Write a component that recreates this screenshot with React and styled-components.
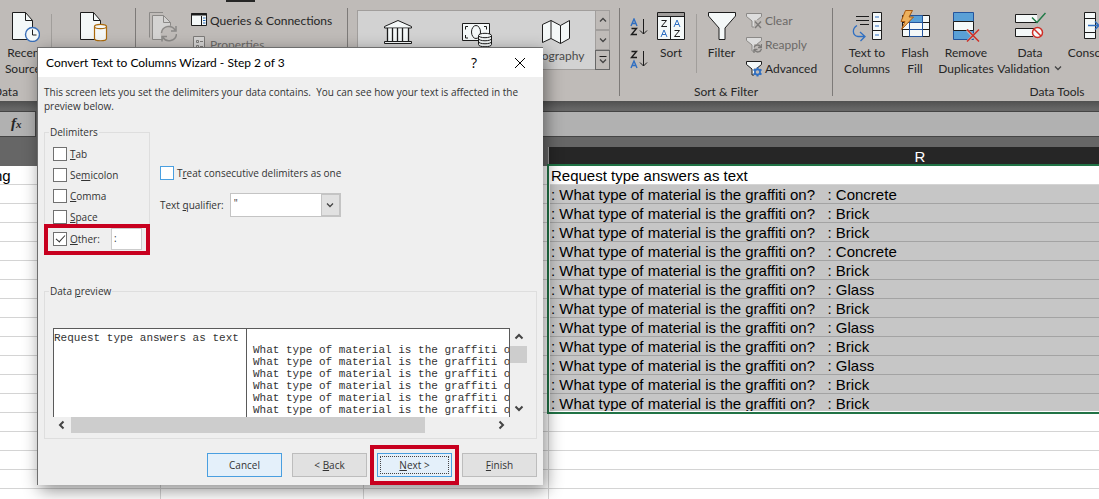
import React, { useState } from 'react'
import styled, { createGlobalStyle, css } from 'styled-components'

const UI_FONT = 'Lato, "Open Sans", sans-serif'
const WIZARD_FONT = '"Open Sans", "Noto Sans", sans-serif'
const SHEET_FONT = '"Liberation Sans", Arial, sans-serif'

const GlobalStyle = createGlobalStyle`
  *, *::before, *::after {
    box-sizing: border-box;
  }
  body {
    margin: 0;
    overflow: hidden;
    font-family: ${UI_FONT};
    font-size: 12px;
    color: #262626;
  }
  button, input, select {
    font: inherit;
    color: inherit;
  }
`

const Page = styled.div`
  position: relative;
  display: flex;
  flex-direction: column;
  height: 100vh;
  overflow: hidden;
  background: #ffffff;
`

/* ribbon */

const Ribbon = styled.header`
  display: flex;
  flex: none;
  overflow: hidden;
  background: linear-gradient(#262626, #262626) 226px 0 / 29px 2px no-repeat, #bfbbb8;
`

const Group = styled.section`
  display: flex;
  flex: none;
  flex-direction: column;
  width: ${({ $width }) => $width}px;
  padding-top: 8px;
`

const GroupBody = styled.div`
  display: flex;
  align-items: flex-start;
  height: 76px;
`

const GroupLabel = styled.div`
  height: 17px;
  line-height: 16px;
  text-align: ${({ $align }) => $align || 'center'};
  white-space: nowrap;
`

const Divider = styled.div`
  flex: none;
  width: 1px;
  height: 88px;
  margin: 8px 0 5px;
  background: #7d7a78;
`

const InnerDivider = styled.div`
  flex: none;
  width: 1px;
  height: 59px;
  margin-top: 6px;
  background: #a19e9b;
`

const LargeButton = styled.button`
  display: flex;
  flex: none;
  flex-direction: column;
  align-items: center;
  width: ${({ $width }) => $width}px;
  padding: 4px 0 0;
  border: 0;
  background: none;
  line-height: 16px;
  white-space: nowrap;
  > svg {
    margin-bottom: 3px;
  }
`

const SmallList = styled.div`
  display: flex;
  flex-direction: column;
  padding-left: ${({ $inset }) => $inset}px;
`

const SmallButton = styled.button`
  display: flex;
  align-items: center;
  gap: 3px;
  height: 24px;
  padding: 0;
  border: 0;
  background: none;
  color: ${({ $muted }) => ($muted ? '#6b6967' : '#262626')};
  white-space: nowrap;
`

const OrderButtons = styled.div`
  display: flex;
  flex-direction: column;
  gap: 12px;
  width: 37px;
  padding: 10px 0 0 10px;
`

const IconButton = styled.button`
  display: block;
  height: 20px;
  padding: 0;
  border: 0;
  background: none;
  svg {
    display: block;
  }
`

const Gallery = styled.div`
  display: flex;
  height: 60px;
  margin: 2px 9px 0;
  border: 1px solid #a19e9c;
  background: #d2d2d2;
`

const GalleryItem = styled.button`
  display: flex;
  flex: 1;
  flex-direction: column;
  align-items: center;
  padding: 7px 0 0;
  border: 0;
  background: none;
  color: #4a4a4a;
`

const GalleryScroll = styled.div`
  display: flex;
  flex-direction: column;
  width: 15px;
  margin: -1px -1px -1px 0;
`

const GalleryArrow = styled.button`
  display: grid;
  place-items: center;
  flex: 1;
  padding: 0;
  border: 1px solid ${({ $strong }) => ($strong ? '#666666' : '#a19e9c')};
  background: #bfbbb8;
`

/* formula bar and sheet */

const FormulaStrip = styled.div`
  display: flex;
  flex: none;
  gap: 3px;
  height: 46px;
  padding: 10px 0;
  background: linear-gradient(#505050, #666666 8px);
`

const FormulaBox = styled.div`
  flex: ${({ $grow }) => ($grow ? 1 : 'none')};
  width: ${({ $grow }) => ($grow ? 'auto' : '36px')};
  padding-left: 11px;
  border: 1px solid #444444;
  border-width: 1px ${({ $grow }) => ($grow ? 0 : 1)}px 1px 0;
  background: #b1b1b1;
  font: italic bold 15px/23px "Liberation Serif", serif;
  sub {
    font-size: 11px;
    line-height: 0;
    vertical-align: baseline;
  }
`

const Sheet = styled.main`
  position: relative;
  flex: 1;
  overflow: hidden;
`

const SheetTable = styled.table`
  width: 1292px;
  table-layout: fixed;
  border-collapse: separate;
  border-spacing: 0;
  font: 15px/16px ${SHEET_FONT};
  color: #000000;
`

const ColumnHead = styled.th`
  height: 19px;
  padding: 0;
  border-right: 1px solid #a0a0a0;
  background: ${({ $active }) => ($active ? '#262626' : '#666666')};
  color: #ffffff;
  font-weight: normal;
`

const Cell = styled.td`
  height: 19px;
  padding: 2px 0 0 2px;
  border: 1px solid #d4d4d4;
  border-width: 0 1px 1px 0;
  overflow: hidden;
  white-space: pre;
  ${({ $selected }) => $selected && css`
    border-color: #a3a3a3;
    background: #c6c6c6;
  `}
  ${({ $clipped }) => $clipped && css`
    text-indent: -8px;
  `}
`

const Selection = styled.div`
  position: absolute;
  top: 17px;
  right: -4px;
  left: 547px;
  height: 250px;
  border: 2px solid #217346;
  box-shadow: inset 0 0 0 1px #ffffff;
  pointer-events: none;
`

/* wizard */

const Dialog = styled.form`
  position: absolute;
  top: 47px;
  left: 37px;
  width: 506px;
  border: 1px solid #6e6e6e;
  border-width: 1px 0 0 1px;
  background: #efefef;
  box-shadow: 3px 5px 16px rgba(0, 0, 0, 0.45);
  font-family: ${WIZARD_FONT};
  font-size: 10px;
  line-height: 14px;
  color: #333333;
`

const TitleBar = styled.div`
  display: flex;
  align-items: center;
  height: 29px;
  padding-left: 8px;
  background: #ffffff;
  color: #000000;
`

const Title = styled.h1`
  flex: 1;
  margin: 0;
  font: 12px/16px ${UI_FONT};
`

const TitleButton = styled.button`
  display: grid;
  place-items: center;
  width: 46px;
  height: 29px;
  padding: 0;
  border: 0;
  background: none;
  font-size: 14px;
`

const DialogBody = styled.div`
  padding: 8px 6px;
`

const Intro = styled.p`
  margin: 0 0 12px;
  padding-right: 16px;
`

const Options = styled.div`
  display: flex;
  gap: 10px;
  margin-bottom: 31px;
`

const Fieldset = styled.fieldset`
  min-width: 0;
  margin: 0;
  padding: ${({ $padding }) => $padding};
  border: 1px solid #dedede;
  legend {
    margin-left: -4px;
    padding: 0 1px;
  }
`

const DelimiterGroup = styled(Fieldset)`
  display: flex;
  flex-direction: column;
  width: 106px;
`

const CheckList = styled.div`
  display: flex;
  flex-direction: column;
  gap: 1px;
`

const CheckRow = styled.div`
  position: relative;
  display: flex;
  align-items: center;
  gap: 3px;
  height: ${({ $tall }) => ($tall ? 22 : 20)}px;
`

const CheckBox = styled.input`
  display: grid;
  place-items: center;
  appearance: none;
  width: 14px;
  height: 14px;
  margin: 0;
  border: 1px solid ${({ $hot }) => ($hot ? '#4a9fe0' : '#707070')};
  background: #ffffff;
  &:checked::before {
    content: '';
    width: 9px;
    height: 5px;
    margin-top: -3px;
    border: solid #333333;
    border-width: 0 0 1px 1px;
    transform: rotate(-48deg);
  }
`

const OtherInput = styled.input`
  width: 31px;
  height: 22px;
  margin-left: auto;
  padding: 0 2px 2px;
  border: 1px solid #cccccc;
  background: #ffffff;
`

const redFrame = css`
  &::after {
    content: '';
    position: absolute;
    border: 4px solid #c8001f;
    pointer-events: none;
  }
`

const OtherRow = styled(CheckRow)`
  padding-right: 7px;
  ${redFrame}
  &::after {
    inset: -4px -1px -5px -9px;
  }
`

const SideOptions = styled.div`
  display: flex;
  flex-direction: column;
  gap: 10px;
  padding-top: 38px;
`

const QualifierRow = styled.div`
  display: flex;
  align-items: center;
  gap: 6px;
`

const SelectBox = styled.div`
  display: grid;
  grid-template-columns: 1fr 19px;
  width: 111px;
  height: 24px;
  border: 1px solid #c4c4c4;
  background: #ffffff;
  select {
    grid-area: 1 / 1 / 2 / 3;
    appearance: none;
    padding: 0 3px 4px;
    border: 0;
    background: none;
  }
  span {
    grid-area: 1 / 2;
    display: grid;
    place-items: center;
    border: 1px solid #c4c4c4;
    background: #e1e1e1;
    pointer-events: none;
  }
`

const PreviewGrid = styled.div`
  display: grid;
  grid-template-columns: 1fr 17px;
`

const PreviewPane = styled.div`
  height: 89px;
  overflow: hidden;
  border: 1px solid #5a5a5a;
  border-bottom: 0;
  background: #ffffff;
`

const PreviewTable = styled.table`
  width: 100%;
  table-layout: fixed;
  border-spacing: 0;
  font: 11px/12px "Liberation Mono", monospace;
  td {
    height: 12px;
    padding: 0;
    overflow: hidden;
    white-space: nowrap;
    vertical-align: top;
  }
  td:first-child {
    width: 193px;
    border-right: 1px solid #5a5a5a;
  }
  td:last-child {
    padding-left: 6px;
  }
  tr:first-child td {
    height: 15px;
    padding-top: 3px;
  }
  tr:last-child td {
    height: 14px;
  }
`

const ScrollTrack = styled.div`
  display: flex;
  flex-direction: ${({ $vertical }) => ($vertical ? 'column' : 'row')};
  align-items: center;
  justify-content: space-between;
  height: ${({ $vertical }) => ($vertical ? 'auto' : '16px')};
  width: ${({ $vertical }) => ($vertical ? '17px' : 'auto')};
`

const ScrollArrow = styled.button`
  display: grid;
  place-items: center;
  width: 18px;
  height: 18px;
  padding: 0;
  border: 0;
  background: none;
`

const ScrollThumb = styled.div`
  width: ${({ $vertical }) => ($vertical ? '17px' : '354px')};
  height: ${({ $vertical }) => ($vertical ? '17px' : '16px')};
  margin: ${({ $vertical }) => ($vertical ? '0 0 auto' : '0 auto 0 0')};
  background: #cdcdcd;
`

const Footer = styled.div`
  display: flex;
  justify-content: flex-end;
  gap: 10px;
  margin-top: 14px;
`

const ActionSlot = styled.div`
  position: relative;
  ${({ $framed }) => $framed && redFrame}
  &::after {
    inset: -8px -7px;
  }
`

const ActionButton = styled.button`
  display: block;
  width: 75px;
  height: 24px;
  padding: 2px;
  border: 1px solid ${({ $hot }) => ($hot ? '#4a9fe0' : '#bdbdbd')};
  background: ${({ $hot }) => ($hot ? '#e4f0fa' : '#e1e1e1')};
  span {
    display: block;
    height: 18px;
    line-height: 16px;
    border: 1px ${({ $focused }) => ($focused ? 'dotted #444444' : 'solid transparent')};
  }
`

/* icons */

const Svg = ({ w = 28, h = 30, children }) => (
  <svg width={w} height={h} viewBox={`0 0 ${w} ${h}`} fill="none" stroke="#1c1c1c" aria-hidden="true">
    {children}
  </svg>
)

const RecentIcon = () => <Svg>
  <path d="M.5.5h13l7 8v19H.5z" fill="#f4f8f8" />
  <path d="M13.5.5v8h7" />
  <circle cx="20.500" cy="22.500" r="7" fill="#f4f8f8" stroke="#3a6fb8" strokeWidth="1.400" />
  <path d="M20.500 17.500v5.500h4" />
</Svg>

const ConnectionsIcon = () => <Svg>
  <path d="M.5.5h13l7 8v19H.5z" fill="#f4f8f8" />
  <path d="M13.5.5v8h7" />
  <path d="M14.500 14.500v12c0 3 12 3 12 0v-12" fill="#f4f8f8" stroke="#ab6a0c" strokeWidth="1.200" />
  <ellipse cx="20.500" cy="14.500" rx="6" ry="2.200" fill="#f4f8f8" stroke="#ab6a0c" strokeWidth="1.200" />
</Svg>

const RefreshIcon = () => <Svg>
  <g stroke="#8b8987">
    <path d="M14 .5H.5v25" />
    <path d="M3.500 27.500v-24h11l7 7v17z" fill="#d4d3d2" />
    <path d="M14.500 3.500v7h7" />
    <circle cx="20" cy="22" r="8.500" fill="#bfbbb8" stroke="none" />
    <path d="M12.500 21c.5-7 10-9 13.500-3M27 14v5h-5M27.500 22c-.5 7-10 9-13.500 3.500M13 29.500v-5h5" strokeWidth="1.500" />
  </g>
</Svg>

const QueriesIcon = () => <Svg w={16} h={16}>
  <path d="M.5 1.500h15v12H.5z" fill="#f4f8f8" />
  <path d="M0 2.500h16" strokeWidth="2" />
  <path d="M10.500 4v9" />
  <path d="M12 6h2.500M12 8.500h2.500M12 11h2.500" stroke="#2b6cb8" />
</Svg>

const PropertiesIcon = () => <Svg w={16} h={16}>
  <g stroke="#7c7a78">
    <path d="M2.500.5h11v15h-11z" fill="#d4d3d2" />
    <path d="M5.500 4.500h2v2h-2zM5.500 9.500h2v2h-2zM9 5.500h3M9 10.500h3" />
  </g>
</Svg>

const BankIcon = () => <Svg h={30}>
  <path d="M.5 8.500 14 2.500l13.500 6v1.500H.5z" fill="#f4f8f8" />
  <path d="M3.500 10.500h21v13h-21z" fill="#f4f8f8" stroke="none" />
  <path d="M3.500 10v13M8.500 10v13M13.500 10v13M18.500 10v13M24.500 10v13" strokeWidth="1.300" />
  <path d="M.5 23.500h27v2H.5z" fill="#f4f8f8" />
</Svg>

const MoneyIcon = () => <Svg w={30} h={30}>
  <path d="M.5 5.500h27v17H.5z" fill="#f4f8f8" />
  <path d="M6 8.500H3.500v3M3.500 17v3H6M22 8.500h2.500v3" />
  <ellipse cx="14" cy="14" rx="4.500" ry="6.500" />
  <path d="M16.500 17.500v9c0 3 13 3 13 0v-9" fill="#f4f8f8" />
  <ellipse cx="23" cy="17.500" rx="6.500" ry="2.200" fill="#f4f8f8" />
  <path d="M16.500 20.500c0 3 13 3 13 0M16.500 23.500c0 3 13 3 13 0" />
</Svg>

const MapIcon = () => <Svg h={30}>
  <path d="m.5 6.500 8.500-4 9.500 5 9-5v18l-9 5-9.500-5-8.500 4z" fill="#f4f8f8" />
  <path d="M9 2.500v18M18.500 7.500v18" />
</Svg>

const Chevron = ({ dir = 'down', bar, heavy }) => {
  const turn = { down: 0, left: 90, up: 180, right: 270 }[dir]
  return <Svg w={10} h={10}>
    {bar && <path d="M1.500 1.500h7" />}
    <path d={bar ? 'm2 4.500 3 3 3-3' : heavy ? 'm1.500 3.500 3.500 3.500 3.500-3.500' : 'm2 3.500 3 3 3-3'} transform={`rotate(${turn} 5 5)`} stroke="#444444" strokeWidth={heavy ? 2 : 1.300} />
  </Svg>
}

const A_SHAPE = 'm0 7 3-7 3 7M1 4.500h4'
const Z_SHAPE = 'M.5.5h5l-5 6h5.500'

const OrderIcon = ({ reverse }) => <Svg w={18} h={20}>
  <path d={A_SHAPE} transform={`translate(1 ${reverse ? 11 : 1})`} stroke="#2f6fc2" strokeWidth="1.400" />
  <path d={Z_SHAPE} transform={`translate(1 ${reverse ? 1 : 10})`} strokeWidth="1.400" />
  <path d="M13.500 1v15M10 12.500l3.500 3.500 3.500-3.500" />
</Svg>

const SortIcon = () => <Svg>
  <path d="M.5.5h27v27H.5z" fill="#f4f8f8" />
  <path d="M1 1h26v3H1z" fill="#a09d9b" stroke="none" />
  <path d="M.5 4.500h27M13.500 4.500v23" />
  <path d={Z_SHAPE} transform="translate(4 8)" />
  <path d={A_SHAPE} transform="translate(17 8)" stroke="#2f6fc2" />
  <path d={A_SHAPE} transform="translate(4 18)" stroke="#2f6fc2" />
  <path d={Z_SHAPE} transform="translate(17 18)" />
</Svg>

const FilterIcon = () => <Svg>
  <path d="M.5.5h27v3.500L17 16v11.500h-6V16L.5 4z" fill="#f4f8f8" />
</Svg>

const SmallFilterIcon = ({ kind }) => {
  const muted = kind !== 'advanced'
  return <Svg w={16} h={17}>
    <path d="M.5 1.500h15v3L10 9v6H6V9L.5 4.500z" fill={muted ? '#dddddd' : '#f4f8f8'} stroke={muted ? '#8b8987' : '#1c1c1c'} />
    <path d="M8 8h8v9H8z" fill="#bfbbb8" stroke="none" />
    {kind === 'clear' && <path d="m9 9.500 6 6.500M15 9.500 9 16" stroke="#7c7a78" strokeWidth="1.400" />}
    {kind === 'reapply' && <path d="M8 11.500c1-3 5-3.500 7-.5M15.500 8v3.500H12M15.500 13c-1 3.500-5 4-7 1M8 17v-3.500h3.500" stroke="#7c7a78" strokeWidth="1.300" />}
    {kind === 'advanced' && <>
      <circle cx="11.500" cy="12" r="2.600" stroke="#2f6fc2" strokeWidth="1.600" />
      <path d="M11.500 7.500v2M11.500 14.500v2M7.500 9.500l2 1.200M13.500 13.300l2 1.200M15.500 9.500l-2 1.200M9.500 13.300l-2 1.200" stroke="#2f6fc2" strokeWidth="2" />
    </>}
  </Svg>
}

const TextColumnsIcon = () => <Svg w={31}>
  <path d="M4 4.500h13M4 8.500h13M8 12.500h9" />
  <path d="M5 13.500c-5 3-5 10 1 11h6M8 20l5 4.500L8.500 29" stroke="#2f6fc2" strokeWidth="1.300" />
  <path d="M20.500.5h9v27h-9zM20.500 9.500h9M20.500 18.500h9" fill="#f4f8f8" />
  <path d="M23 5h4M23 14h4M23 23h4" stroke="#2f6fc2" />
</Svg>

const FlashIcon = () => (
  <svg width="32" height="30" viewBox="0 -2 32 30" fill="none" stroke="#1c1c1c" overflow="visible" aria-hidden="true">
    <path d="M3.500 1.500h27v21h-27z" fill="#f4f8f8" />
    <path d="M11 1.500h12.500v7H11z" fill="#5aa0d6" stroke="none" />
    <path d="M3.500 8.500h27M3.500 15.500h27M23.500 1.500v21" />
    <path d="M10.500 1.500h13v21h-13zM10.500 8.500h13M10.500 15.500h13" stroke="#24549c" />
    <path d="M6.500-3.500h7L10 3h4.500l-12 12.500L6 7.500H2z" fill="#edb05c" stroke="#a9590f" />
  </svg>
)

const DuplicatesIcon = () => <Svg w={28}>
  <path d="M1.500.5h20v9h-20zM1.500 18.500h20v9h-20z" fill="#5aa0d6" stroke="#24549c" />
  <path d="M1.500 9.500h20v9h-20z" fill="#f4f8f8" />
  <path d="m15 18 12 12M27 18 15 30" stroke="#bfbbb8" strokeWidth="3" />
  <path d="m15 17.500 12 12M27 17.500l-12 12" stroke="#cf2f27" strokeWidth="1.500" />
</Svg>

const ValidationIcon = () => <Svg w={32}>
  <path d="M23 2.500H1.500v8h22M19 24.500H1.500v-8H20" fill="#f4f8f8" />
  <path d="m18 5.500 5 5L31.500 1" stroke="#1f7a46" strokeWidth="1.500" />
  <circle cx="23.500" cy="20.500" r="5" fill="#f4f8f8" stroke="#cf2f27" strokeWidth="1.500" />
  <path d="m20 17 7 7" stroke="#cf2f27" strokeWidth="1.500" />
</Svg>

const ConsolidateIcon = () => <Svg w={30}>
  <path d="M.5.5h11v26H.5zM.5 6.500h11M.5 20.500h11M17.500 9.500h12v9h-12z" fill="#f4f8f8" />
  <path d="M4 13.500h11M11 9.500l4 4-4 4" stroke="#2f6fc2" strokeWidth="1.500" />
</Svg>

const CloseIcon = () => <Svg w={12} h={12}>
  <path d="m1 1 10 10M11 1 1 11" stroke="#000000" />
</Svg>

/* data */

const answers = [
  'Concrete', 'Brick', 'Brick', 'Concrete', 'Brick', 'Glass',
  'Brick', 'Glass', 'Brick', 'Glass', 'Brick', 'Brick'
]
const rows = [
  'Request type answers as text',
  ...answers.map(answer => `: What type of material is the graffiti on?   : ${answer}`)
]
const blankRows = 40

const delimiters = [
  { id: 'tab', label: <><u>T</u>ab</> },
  { id: 'semicolon', label: <>Se<u>m</u>icolon</> },
  { id: 'comma', label: <><u>C</u>omma</> },
  { id: 'space', label: <><u>S</u>pace</> }
]

const DataLabel = styled.span`
  margin-left: -7px;
`

const SortGap = styled.div`
  width: 11px;
`

const RibbonBar = () => <Ribbon>
  <Group $width={135}>
    <GroupBody>
      <LargeButton $width={51} type="button">
        <RecentIcon />
        <span>Recent<br />Sources</span>
      </LargeButton>
      <InnerDivider />
      <LargeButton $width={84} type="button" aria-label="Existing Connections"><ConnectionsIcon /></LargeButton>
    </GroupBody>
    <GroupLabel $align="left"><DataLabel>Data</DataLabel></GroupLabel>
  </Group>
  <Divider />
  <Group $width={211}>
    <GroupBody>
      <LargeButton $width={54} type="button" aria-label="Refresh All"><RefreshIcon /></LargeButton>
      <SmallList $inset={1}>
        <SmallButton type="button"><QueriesIcon />Queries &amp; Connections</SmallButton>
        <SmallButton type="button" $muted><PropertiesIcon />Properties</SmallButton>
      </SmallList>
    </GroupBody>
  </Group>
  <Divider />
  <Group $width={271}>
    <Gallery>
      <GalleryItem type="button" aria-label="Stocks"><BankIcon /></GalleryItem>
      <GalleryItem type="button" aria-label="Currencies"><MoneyIcon /></GalleryItem>
      <GalleryItem type="button"><MapIcon />Geography</GalleryItem>
      <GalleryScroll>
        <GalleryArrow type="button" aria-label="Previous row"><Chevron dir="up" /></GalleryArrow>
        <GalleryArrow type="button" aria-label="Next row"><Chevron /></GalleryArrow>
        <GalleryArrow type="button" aria-label="More" $strong><Chevron bar /></GalleryArrow>
      </GalleryScroll>
    </Gallery>
  </Group>
  <Divider />
  <Group $width={212}>
    <GroupBody>
      <OrderButtons>
        <IconButton type="button" aria-label="Sort A to Z"><OrderIcon /></IconButton>
        <IconButton type="button" aria-label="Sort Z to A"><OrderIcon reverse /></IconButton>
      </OrderButtons>
      <LargeButton $width={28} type="button"><SortIcon />Sort</LargeButton>
      <SortGap />
      <InnerDivider />
      <LargeButton $width={49} type="button"><FilterIcon />Filter</LargeButton>
      <SmallList $inset={0}>
        <SmallButton type="button" $muted><SmallFilterIcon kind="clear" />Clear</SmallButton>
        <SmallButton type="button" $muted><SmallFilterIcon kind="reapply" />Reapply</SmallButton>
        <SmallButton type="button"><SmallFilterIcon kind="advanced" />Advanced</SmallButton>
      </SmallList>
    </GroupBody>
    <GroupLabel>Sort &amp; Filter</GroupLabel>
  </Group>
  <Divider />
  <Group $width={448}>
    <GroupBody>
      <LargeButton $width={68} type="button"><TextColumnsIcon /><span>Text to<br />Columns</span></LargeButton>
      <LargeButton $width={28} type="button"><FlashIcon /><span>Flash<br />Fill</span></LargeButton>
      <LargeButton $width={74} type="button"><DuplicatesIcon /><span>Remove<br />Duplicates</span></LargeButton>
      <LargeButton $width={54} type="button"><ValidationIcon /><span>Data<br />Validation <Chevron /></span></LargeButton>
      <LargeButton $width={84} type="button"><ConsolidateIcon />Consolidate</LargeButton>
    </GroupBody>
    <GroupLabel>Data Tools</GroupLabel>
  </Group>
</Ribbon>

const SheetView = () => <Sheet>
  <SheetTable>
    <colgroup>
      <col width="161" />
      <col width="203" />
      <col width="185" />
      <col width="743" />
    </colgroup>
    <thead>
      <tr>
        <ColumnHead />
        <ColumnHead />
        <ColumnHead />
        <ColumnHead $active>R</ColumnHead>
      </tr>
    </thead>
    <tbody>
      {[...rows, ...Array(blankRows).fill('')].map((text, i) => (
        <tr key={i}>
          <Cell $clipped>{i === 0 ? 'ng' : ''}</Cell>
          <Cell />
          <Cell />
          <Cell $selected={i > 0 && i < rows.length}>{text}</Cell>
        </tr>
      ))}
    </tbody>
  </SheetTable>
  <Selection />
</Sheet>

const Wizard = () => {
  const [checked, setChecked] = useState({ other: true })
  const [other, setOther] = useState(':')
  const toggle = id => setChecked({ ...checked, [id]: !checked[id] })

  return <Dialog role="dialog" aria-labelledby="wizard-title" onSubmit={e => e.preventDefault()}>
    <TitleBar>
      <Title id="wizard-title">Convert Text to Columns Wizard - Step 2 of 3</Title>
      <TitleButton type="button">?</TitleButton>
      <TitleButton type="button" aria-label="Close"><CloseIcon /></TitleButton>
    </TitleBar>
    <DialogBody>
      <Intro>
        This screen lets you set the delimiters your data contains.&nbsp; You can see how your text is affected in the preview below.
      </Intro>
      <Options>
        <DelimiterGroup $padding="5px 0 2px 8px">
          <legend>Delimiters</legend>
          <CheckList>
            {delimiters.map(({ id, label }) => (
              <CheckRow key={id}>
                <CheckBox type="checkbox" id={id} checked={!!checked[id]} onChange={() => toggle(id)} />
                <label htmlFor={id}>{label}</label>
              </CheckRow>
            ))}
            <OtherRow $tall>
              <CheckBox type="checkbox" id="other" checked={!!checked.other} onChange={() => toggle('other')} />
              <label htmlFor="other"><u>O</u>ther:</label>
              <OtherInput aria-label="Other delimiter" value={other} onChange={e => setOther(e.target.value)} />
            </OtherRow>
          </CheckList>
        </DelimiterGroup>
        <SideOptions>
          <CheckRow>
            <CheckBox type="checkbox" id="consecutive" $hot checked={!!checked.consecutive} onChange={() => toggle('consecutive')} />
            <label htmlFor="consecutive">T<u>r</u>eat consecutive delimiters as one</label>
          </CheckRow>
          <QualifierRow>
            <label htmlFor="qualifier">Text <u>q</u>ualifier:</label>
            <SelectBox>
              <select id="qualifier" defaultValue={'"'}>
                <option>"</option>
                <option>'</option>
                <option>{'{none}'}</option>
              </select>
              <span><Chevron /></span>
            </SelectBox>
          </QualifierRow>
        </SideOptions>
      </Options>
      <Fieldset $padding="30px 9px 5px 8px">
        <legend>Data <u>p</u>review</legend>
        <PreviewGrid>
          <PreviewPane>
            <PreviewTable>
              <tbody>
                <tr><td>Request type answers as text</td><td /></tr>
                {answers.slice(0, 6).map((_, i) => (
                  <tr key={i}><td /><td>What type of material is the graffiti on?</td></tr>
                ))}
              </tbody>
            </PreviewTable>
          </PreviewPane>
          <ScrollTrack $vertical>
            <ScrollArrow type="button" aria-label="Scroll up"><Chevron dir="up" heavy /></ScrollArrow>
            <ScrollThumb $vertical />
            <ScrollArrow type="button" aria-label="Scroll down"><Chevron heavy /></ScrollArrow>
          </ScrollTrack>
          <ScrollTrack>
            <ScrollArrow type="button" aria-label="Scroll left"><Chevron dir="left" heavy /></ScrollArrow>
            <ScrollThumb />
            <ScrollArrow type="button" aria-label="Scroll right"><Chevron dir="right" heavy /></ScrollArrow>
          </ScrollTrack>
        </PreviewGrid>
      </Fieldset>
      <Footer>
        <ActionSlot><ActionButton type="button" $hot><span>Cancel</span></ActionButton></ActionSlot>
        <ActionSlot><ActionButton type="button"><span>&lt; <u>B</u>ack</span></ActionButton></ActionSlot>
        <ActionSlot $framed><ActionButton type="submit" $hot $focused><span><u>N</u>ext &gt;</span></ActionButton></ActionSlot>
        <ActionSlot><ActionButton type="button"><span><u>F</u>inish</span></ActionButton></ActionSlot>
      </Footer>
    </DialogBody>
  </Dialog>
}

const App = () => <>
  <GlobalStyle />
  <Page>
    <RibbonBar />
    <FormulaStrip>
      <FormulaBox>f<sub>x</sub></FormulaBox>
      <FormulaBox $grow />
    </FormulaStrip>
    <SheetView />
    <Wizard />
  </Page>
</>

export default App
